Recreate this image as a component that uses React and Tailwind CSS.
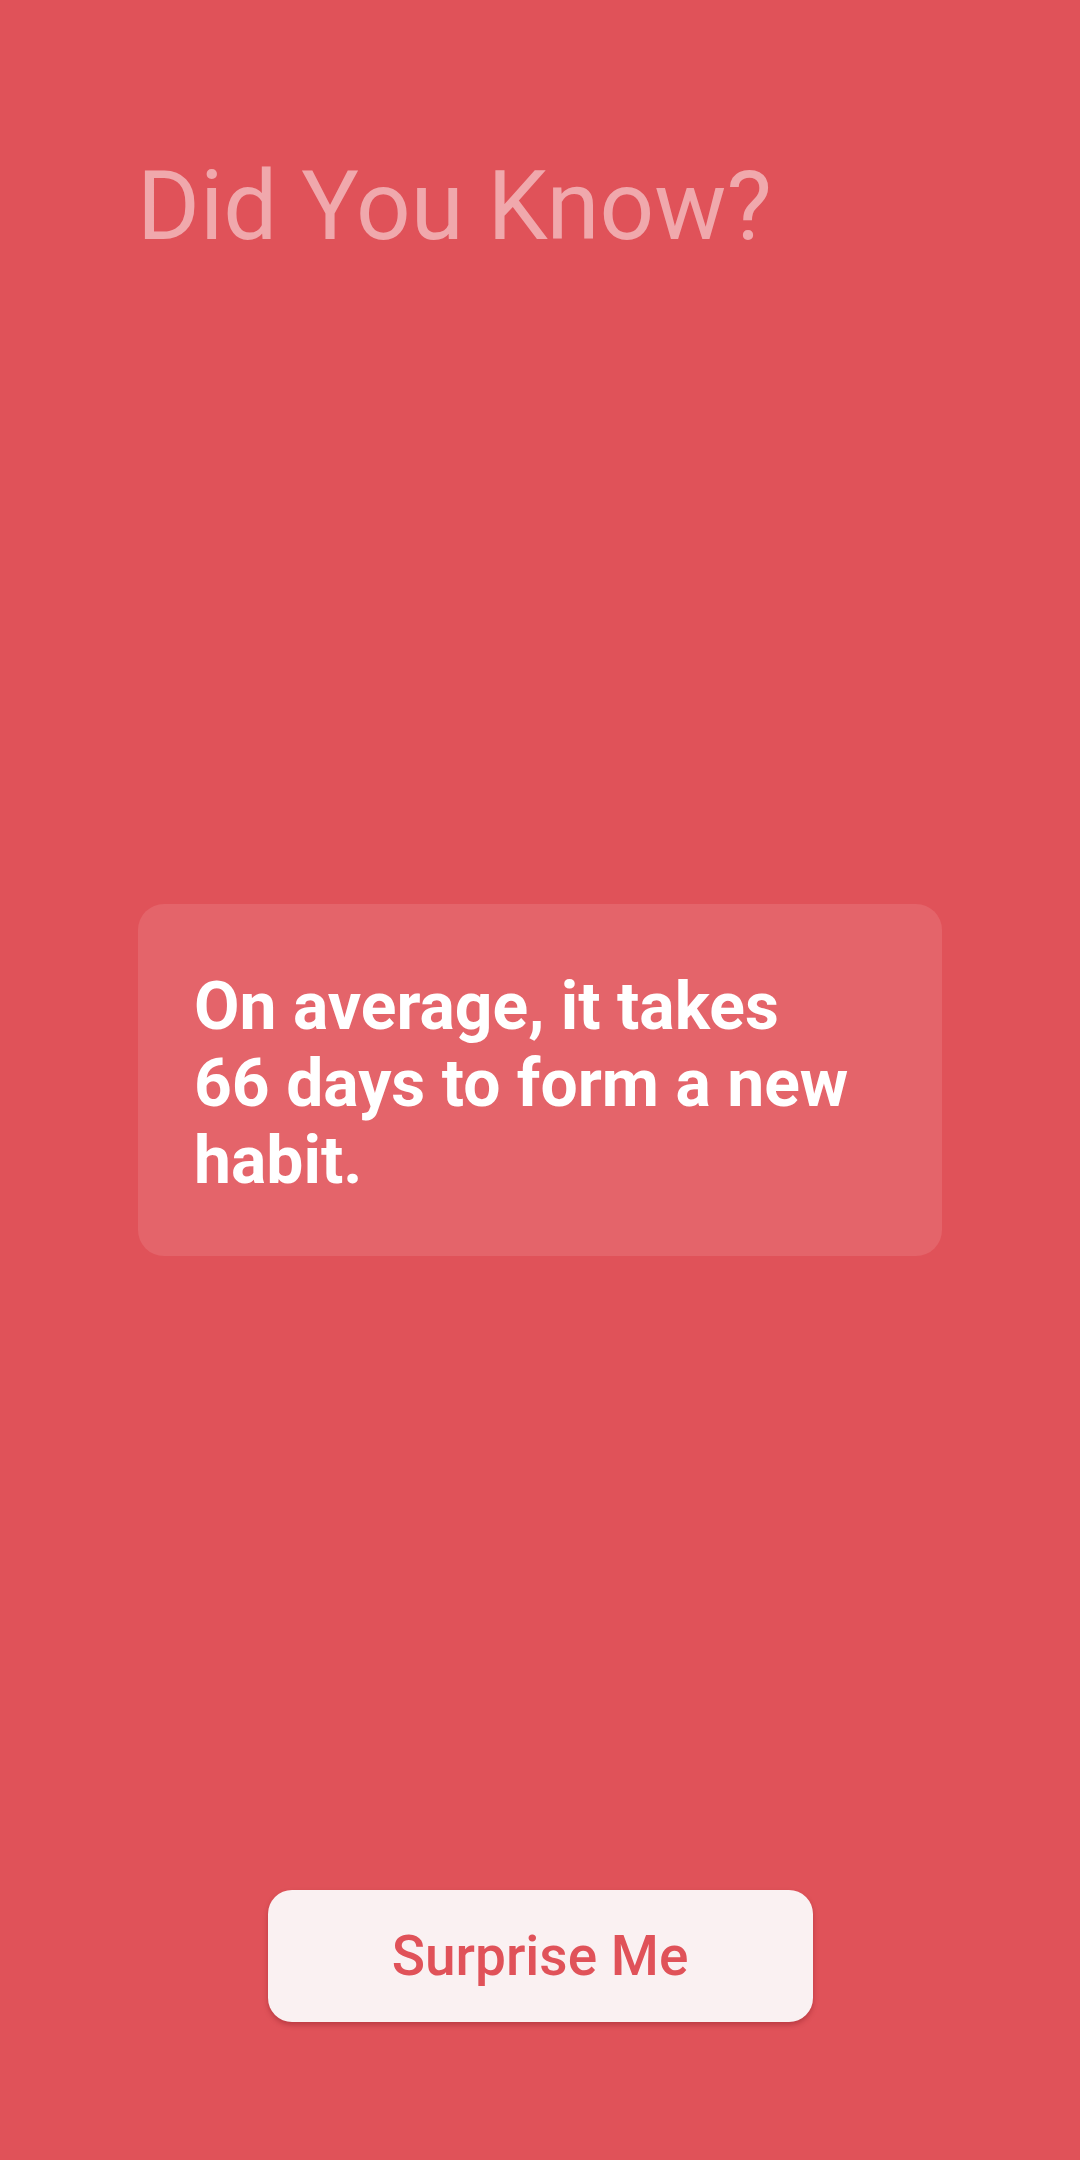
export default function App() {
  return (
    <div
      className="w-[1080px] h-[2160px] bg-[#e05259] flex flex-col overflow-hidden"
      style={{ fontFamily: "Roboto, 'Noto Sans', sans-serif" }}
    >
      <h1 className="mt-[158px] ml-[137px] text-[96px] leading-none font-normal text-[#f0a8ac]">
        Did You Know?
      </h1>

      <div className="mt-[650px] mx-[138px] rounded-[26px] bg-[#e4646a] pt-[64px] pb-[57px] pl-[56px] pr-[88px]">
        <p className="text-[66px] leading-[77px] font-bold text-white">
          On average, it takes 66 days to form a new habit.
        </p>
      </div>

      <div className="mt-[634px] flex justify-center">
        <button className="w-[545px] h-[132px] rounded-[24px] bg-[#faf1f2] shadow-[0_3px_5px_rgba(120,20,30,0.35)] flex items-center justify-center text-[55px] font-medium text-[#e05259]">
          Surprise Me
        </button>
      </div>
    </div>
  );
}
